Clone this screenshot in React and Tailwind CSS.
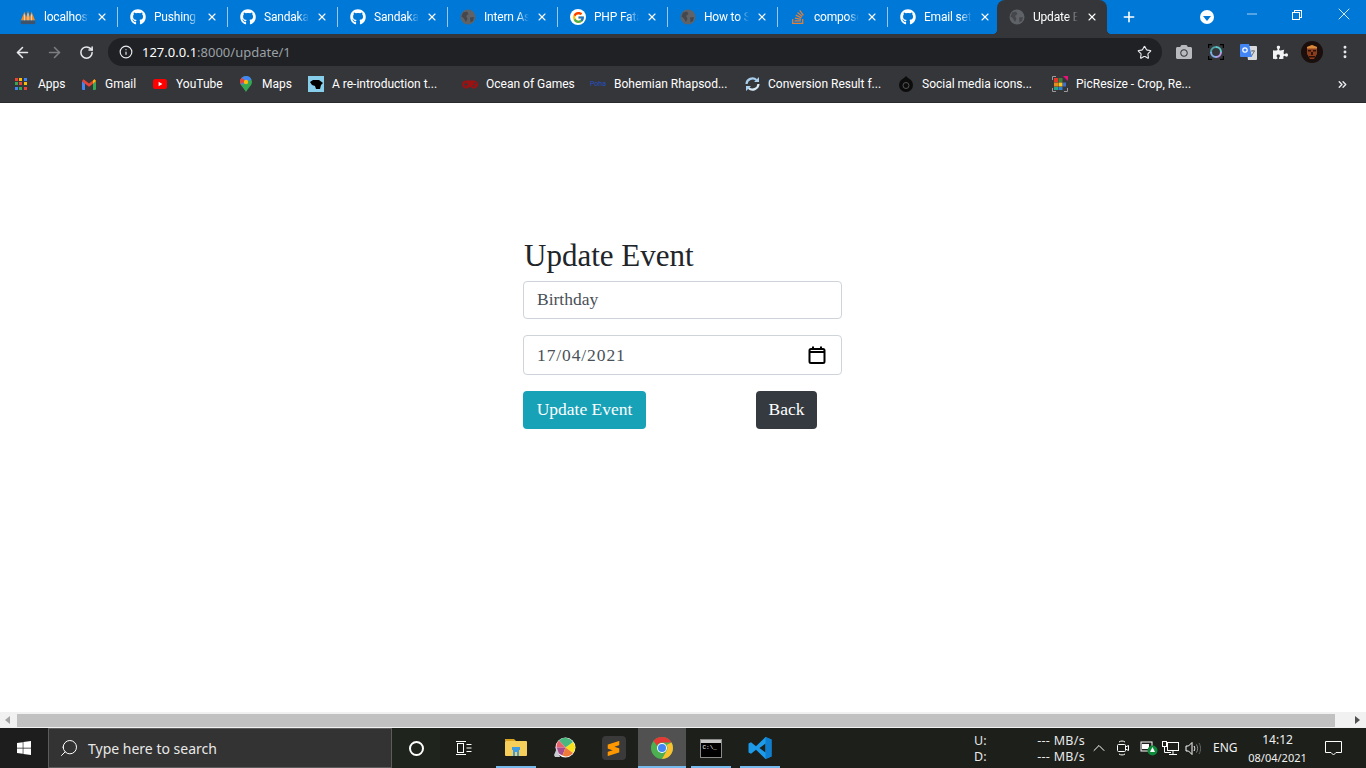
import React from 'react';
import { ArrowLeft, ArrowRight, RotateCw, Info, Star, X, Plus, Minus, Search, ChevronUp, ChevronsRight, MoreVertical } from 'lucide-react';
import { FaGithub, FaStackOverflow, FaPuzzlePiece, FaCamera, FaWindows, FaGamepad } from 'react-icons/fa';
import { FcGoogle } from 'react-icons/fc';
import { SiSublimetext } from 'react-icons/si';

const UI_FONT = 'font-["Noto_Sans","Open_Sans",sans-serif]';
const LABEL_FONT = 'font-["Roboto","Noto_Sans",sans-serif]';

function Globe() {
  return <svg width="16" height="16" viewBox="0 0 16 16">
      <circle cx="8" cy="8" r="7.5" fill="#5f6368" />
      <path d="M3 3.5 7 2.5 8.5 5 6 7 7.5 9.5 6 13 3.5 9 1.5 7.5ZM10 8.5 14 8 13 12 10.5 13.5Z" fill="#35363a" opacity="0.6" />
    </svg>;
}

function Xampp() {
  return <svg width="18" height="18" viewBox="0 0 18 18">
      <path d="M1 13 5 3 7 9 9 2 11 9 13 3 17 13Z" fill="#f08a24" />
      <path d="M5 6v7M9 5v8M13 6v7" stroke="#cfe3f5" strokeWidth="1" />
      <rect x="1" y="13" width="16" height="4" fill="#40536b" />
    </svg>;
}

const TABS = [
  { icon: <Xampp />, title: 'localhost' },
  { icon: <FaGithub size={16} color="#fff" />, title: 'Pushing t' },
  { icon: <FaGithub size={16} color="#fff" />, title: 'Sandakal' },
  { icon: <FaGithub size={16} color="#fff" />, title: 'Sandakal' },
  { icon: <Globe />, title: 'Intern As' },
  { icon: <span className="flex w-4 h-4 items-center justify-center rounded-full bg-white"><FcGoogle size={13} /></span>, title: 'PHP Fata' },
  { icon: <Globe />, title: 'How to S' },
  { icon: <FaStackOverflow size={16} color="#e0803a" />, title: 'compose' },
  { icon: <FaGithub size={16} color="#fff" />, title: 'Email set' }
];

function Tab({ icon, title, last }) {
  return <div className="flex w-[110px] h-[34px] shrink-0 items-center pl-3">
      <span className="flex w-4 h-4 shrink-0 items-center justify-center">{icon}</span>
      <span className={`ml-2 w-[48px] overflow-hidden whitespace-nowrap text-xs tracking-[-0.2px] text-white [mask-image:linear-gradient(to_right,black_75%,transparent)] ${LABEL_FONT}`}>{title}</span>
      <X size={12} strokeWidth={2.2} color="#fff" className="ml-[7px] shrink-0" />
      {!last && <span className="ml-[9px] h-5 w-px shrink-0 bg-[#9fc6ea]" />}
    </div>;
}

function AppsIcon() {
  const colors = ['#ea4335', '#fbbc04', '#4285f4', '#34a853', '#ea4335', '#fbbc04', '#4285f4', '#34a853', '#ea4335'];
  return <span className="grid w-3 h-3 grid-cols-3 gap-[1px]">
      {colors.map((c, i) => <span key={i} className="w-[3px] h-[3px]" style={{ background: c }} />)}
    </span>;
}

const GmailIcon = () => <svg width="14" height="11" viewBox="0 0 14 11">
    <path d="M0 2v8a1 1 0 0 0 1 1h2V4.5Z" fill="#4285f4" />
    <path d="M14 2v8a1 1 0 0 1-1 1h-2V4.5Z" fill="#34a853" />
    <path d="M0 2 1.5.3 7 4.5 12.5.3 14 2 11 4.8 7 7.8 3 4.8Z" fill="#ea4335" />
    <path d="M11 1.5 12.5.3 14 2 11 4.8Z" fill="#fbbc04" />
  </svg>;

const YoutubeIcon = () => <svg width="14" height="10" viewBox="0 0 14 10">
    <rect width="14" height="10" rx="2.5" fill="#ff0000" />
    <path d="M5.6 2.8 9.4 5 5.6 7.2Z" fill="#fff" />
  </svg>;

const MapsIcon = () => <svg width="12" height="16" viewBox="0 0 12 16">
    <path d="M6 0a6 6 0 0 1 6 6c0 3-3 5-6 10C3 11 0 9 0 6a6 6 0 0 1 6-6Z" fill="#34a853" />
    <path d="M6 0a6 6 0 0 1 5.4 3.4L2 9C1 8 0 7.4 0 6a6 6 0 0 1 6-6Z" fill="#4285f4" />
    <path d="M1.6 1.8 5 4.5 2 8C1 7.400 0 7 0 6a6 6 0 0 1 1.600-4.200Z" fill="#ea4335" />
    <circle cx="6" cy="6" r="2.200" fill="#fbbc04" />
  </svg>;

const PantherIcon = () => <span className="flex w-4 h-4 items-center justify-center bg-[#87ceeb]">
    <svg width="13" height="11" viewBox="0 0 13 11"><path d="M0 3 3 1h6l4 3-2 2-1 4H6L5 7 2 6Z" fill="#000" /></svg>
  </span>;

const PohaIcon = () => <span className="w-4 overflow-hidden text-[7px] leading-none text-[#2350c8]">Poha</span>;

const SyncIcon = () => <svg width="15" height="14" viewBox="0 0 15 14" fill="none">
    <path d="M1.500 7a6 6 0 0 1 10-4" stroke="#a9cfee" strokeWidth="2.200" />
    <path d="M13.500 7a6 6 0 0 1-10 4" stroke="#d8e9f6" strokeWidth="2.200" />
    <path d="M14 0v5H9ZM1 14V9h5Z" fill="#a9cfee" />
  </svg>;

const SocialIcon = () => <svg width="16" height="16" viewBox="0 0 16 16">
    <circle cx="8" cy="9" r="7" fill="#0c0c0c" />
    <circle cx="8" cy="9.500" r="3" fill="none" stroke="#55565a" strokeWidth="1" />
    <path d="M5 3 8 0l3 3Z" fill="#0c0c0c" />
  </svg>;

const PicResizeIcon = () => <svg width="16" height="16" viewBox="0 0 16 16">
    <path d="M.5 4V.5H4M.5 12v3.500H4M15.500 12v3.500H12" fill="none" stroke="#9a9a9a" />
    <rect x="2" y="2" width="4" height="4" fill="#e5362c" /><rect x="6.500" y="2" width="4" height="4" fill="#3e7f3c" />
    <rect x="2" y="6.500" width="4" height="4" fill="#e58a1f" /><rect x="6.500" y="6.500" width="4" height="4" fill="#f4c81e" />
    <rect x="11" y="6.500" width="3" height="4" fill="#3b6fd1" /><rect x="2" y="11" width="4" height="3" fill="#25a28a" />
    <rect x="6.500" y="11" width="4" height="3" fill="#2d7fd0" /><path d="M11 0h5v5Z" fill="#e6127a" />
  </svg>;

const BOOKMARKS = [
  { icon: <GmailIcon />, label: 'Gmail', w: 'w-[71px]' },
  { icon: <YoutubeIcon />, label: 'YouTube', w: 'w-[86px]' },
  { icon: <MapsIcon />, label: 'Maps', w: 'w-[70px]' },
  { icon: <PantherIcon />, label: 'A re-introduction t...', w: 'w-[154px]' },
  { icon: <FaGamepad size={17} color="#9c1212" />, label: 'Ocean of Games', w: 'w-[128px]' },
  { icon: <PohaIcon />, label: 'Bohemian Rhapsod...', w: 'w-[154px]' },
  { icon: <SyncIcon />, label: 'Conversion Result f...', w: 'w-[154px]' },
  { icon: <SocialIcon />, label: 'Social media icons...', w: 'w-[154px]' },
  { icon: <PicResizeIcon />, label: 'PicResize - Crop, Re...', w: 'w-[160px]' }
];

const Avatar = () => <svg width="22" height="22" viewBox="0 0 22 22">
    <circle cx="11" cy="11" r="11" fill="#1a0f0c" />
    <path d="M6 6 11 4 16 6 16 13 13 18 9 18 6 13Z" fill="#8c3d1c" />
    <path d="M7 9h3v1.500H7ZM12 9h3v1.500h-3ZM10 11h2v3h-2ZM8 15h6v1.500H8Z" fill="#2a120a" />
    <path d="M6 6 11 4 16 6 16 7.500 6 7.500Z" fill="#d98a3a" />
  </svg>;

const LensIcon = () => <svg width="16" height="16" viewBox="0 0 16 16" fill="none">
    <path d="M.5 4V.5H4M12 .5h3.500V4M.5 12v3.500H4M15.500 12v3.500H12" stroke="#000" strokeWidth="1.500" />
    <path d="M8 3a5 5 0 0 1 5 5" stroke="#5ec8c8" strokeWidth="2" /><path d="M13 8a5 5 0 0 1-5 5" stroke="#b79be8" strokeWidth="2" />
    <path d="M8 13a5 5 0 0 1-5-5" stroke="#7fb0e8" strokeWidth="2" /><path d="M3 8a5 5 0 0 1 5-5" stroke="#4da3a3" strokeWidth="2" />
  </svg>;

const TranslateIcon = () => <svg width="17" height="16" viewBox="0 0 17 16">
    <path d="M6 2h10a1 1 0 0 1 1 1v12a1 1 0 0 1-1 1H8Z" fill="#d8dadd" />
    <path d="M1 0h8l3 13H1a1 1 0 0 1-1-1V1a1 1 0 0 1 1-1Z" fill="#4285f4" />
    <circle cx="5" cy="6" r="2.200" fill="none" stroke="#fff" strokeWidth="1.200" />
    <path d="M11 7h4M13 6v1M11.500 12l3-5" stroke="#70757a" strokeWidth="1" />
  </svg>;

function ChromeHeader() {
  return <header className={`shrink-0 ${UI_FONT}`}>
      <div className="flex h-[34px] items-start bg-[#0078d7]">
        <div className="flex pl-[8px]">
          {TABS.map((t, i) => <Tab key={i} icon={t.icon} title={t.title} last={i === TABS.length - 1} />)}
          <div className="relative -ml-[1px] flex w-[110px] h-[34px] items-center rounded-t-lg bg-[#35363a] pl-3">
            <span className="absolute bottom-0 -left-[5px] w-[5px] h-[5px] bg-[radial-gradient(circle_at_0_0,#0078d7_5px,#35363a_5.5px)]" />
            <span className="absolute bottom-0 -right-[5px] w-[5px] h-[5px] bg-[radial-gradient(circle_at_100%_0,#0078d7_5px,#35363a_5.5px)]" />
            <Globe />
            <span className={`ml-2 w-[45px] overflow-hidden whitespace-nowrap text-xs tracking-[-0.2px] text-white [mask-image:linear-gradient(to_right,black_75%,transparent)] ${LABEL_FONT}`}>Update E</span>
            <X size={12} strokeWidth={2.2} color="#fff" className="ml-[8px] shrink-0" />
          </div>
        </div>
        <Plus size={16} strokeWidth={2.4} color="#fff" className="ml-[14px] mt-[9px]" />
        <span className="ml-[63px] mt-[10px] flex w-[14px] h-[14px] items-center justify-center rounded-full bg-white">
          <span className="mt-[2px] border-x-[4px] border-t-[5px] border-x-transparent border-t-[#0078d7]" />
        </span>
        <Minus size={16} strokeWidth={1} color="#fff" className="ml-[30px] mt-[6px]" />
        <span className="relative ml-[32px] mt-[10px] w-[10px] h-[10px]">
          <span className="absolute right-0 top-0 w-2 h-2 border border-white" />
          <span className="absolute bottom-0 left-0 w-2 h-2 border border-white bg-[#0078d7]" />
        </span>
        <X size={20} strokeWidth={1} color="#fff" className="ml-[32px] mt-[4px]" />
      </div>

      <div className="flex h-[36px] items-center bg-[#35363a]">
        <ArrowLeft size={17} strokeWidth={2.2} color="#e8eaed" className="ml-[14px]" />
        <ArrowRight size={17} strokeWidth={2.2} color="#7c7e82" className="ml-[15px]" />
        <RotateCw size={15} strokeWidth={2.4} color="#e8eaed" className="ml-[16px]" />
        <div className="ml-[14px] flex w-[1054px] h-[28px] items-center rounded-full bg-[#202124] pl-[11px] pr-[10px] text-sm">
          <Info size={14} strokeWidth={2} color="#e8eaed" />
          <span className="ml-[9px] text-[13px] text-white">127.0.0.1<span className="text-[#9aa0a6]">:8000/update/1</span></span>
          <Star size={15} strokeWidth={1.8} color="#e8eaed" className="ml-auto" />
        </div>
        <FaCamera size={16} color="#b8babd" className="ml-[14px]" />
        <span className="ml-[16px]"><LensIcon /></span>
        <span className="ml-[16px]"><TranslateIcon /></span>
        <FaPuzzlePiece size={15} color="#f1f3f4" className="ml-[16px]" />
        <span className="ml-[13px]"><Avatar /></span>
        <MoreVertical size={16} strokeWidth={2.4} color="#e8eaed" className="ml-[14px]" />
      </div>

      <div className={`flex h-[33px] items-center border-b border-[#28292c] bg-[#35363a] pb-[4px] ${LABEL_FONT}`}>
        <div className="flex w-[81px] shrink-0 items-center pl-[15px]">
          <span className="flex w-4 h-4 items-center justify-start"><AppsIcon /></span>
          <span className="ml-[7px] whitespace-nowrap text-xs text-white">Apps</span>
        </div>
        {BOOKMARKS.map(b => <div key={b.label} className={`flex shrink-0 items-center ${b.w}`}>
            <span className="flex w-4 h-4 items-center justify-center">{b.icon}</span>
            <span className="ml-2 whitespace-nowrap text-xs text-white">{b.label}</span>
          </div>)}
        <ChevronsRight size={13} strokeWidth={2.6} color="#e8eaed" className="ml-auto mr-[17px]" />
      </div>
    </header>;
}

function UpdateForm() {
  return <main className='flex-1 overflow-hidden bg-white pl-[523px] pt-[134px] font-["Liberation_Serif",Georgia,serif] text-[#212529]'>
      <h1 className="ml-px text-[31px] leading-[37px]">Update Event</h1>
      <form className="mt-[7px] w-[319px]">
        <input defaultValue="Birthday" className="block w-full h-[38px] rounded border border-[#ced4da] px-[13px] pb-[2px] text-[17.500px] text-[#495057] outline-none" />
        <div className="mt-[16px] flex h-[40px] items-center justify-between rounded border border-[#ced4da] pl-[13px] pr-[15px] text-[17.500px] tracking-[0.9px] text-[#495057]">
          <span>17/04/2021</span>
          <svg width="18" height="18" viewBox="0 0 18 18" fill="none">
            <rect x="1.500" y="3" width="15" height="14" rx="1.500" stroke="#000" strokeWidth="2" />
            <path d="M1.500 6h15" stroke="#000" strokeWidth="2" />
            <path d="M5 0.500v3M13 0.500v3" stroke="#000" strokeWidth="2" />
          </svg>
        </div>
        <div className="mt-[16px] flex items-center">
          <button type="button" className="h-[38px] w-[123px] rounded bg-[#17a2b8] pb-[2px] text-[17.500px] text-white">Update Event</button>
          <button type="button" className="ml-[110px] h-[38px] w-[61px] rounded bg-[#343a40] pb-[2px] text-[17.500px] text-white">Back</button>
        </div>
      </form>
    </main>;
}

function ScrollBar() {
  return <div className="flex h-[16px] shrink-0 items-center bg-[#f1f1f1]">
      <span className="ml-[5px] border-y-[4px] border-r-[5px] border-y-transparent border-r-[#a3a3a3]" />
      <div className="ml-[7px] h-[13px] w-[1318px] bg-[#c1c1c1]" />
      <span className="ml-[20px] border-y-[4px] border-l-[5px] border-y-transparent border-l-[#505050]" />
    </div>;
}

const ExplorerIcon = () => <svg width="22" height="20" viewBox="0 0 22 20">
    <path d="M0 1h9l2 2H0Z" fill="#d9a31f" />
    <rect y="3" width="22" height="15" rx="1" fill="#f6cf5a" />
    <path d="M7 9h8v3H7ZM8 12h6v6H8Z" fill="#3f9be0" />
    <rect x="10" y="14" width="2" height="4" fill="#f6cf5a" />
  </svg>;

const PaintIcon = () => <svg width="22" height="22" viewBox="0 0 22 22">
    <circle cx="11.500" cy="10.500" r="10" fill="#fff" />
    <path d="M11.500 10.500 19 5a9 9 0 0 1 0 11Z" fill="#f7e11d" />
    <path d="M11.500 10.500 19 5a9 9 0 0 0-14-1.500Z" fill="#48b87f" />
    <path d="M11.500 10.500 5 3.500a9 9 0 0 0-2.500 7Z" fill="#e7616a" />
    <path d="M11.500 10.500 2.500 10.500a9 9 0 0 0 6 8Z" fill="#a94c8c" />
    <path d="M11.500 10.500 8.500 18.500a9 9 0 0 0 10.500-2.500Z" fill="#ef7a3a" />
    <path d="M0 18 3 11l3 9-5 0Z" fill="#c9cccf" />
  </svg>;

const ChromeIcon = () => <svg width="22" height="22" viewBox="0 0 22 22">
    <circle cx="11" cy="11" r="11" fill="#4caf50" />
    <path d="M11 0a11 11 0 0 1 9.500 5.500H11a5.500 5.500 0 0 0-5 3.200L2.500 3.800A11 11 0 0 1 11 0Z" fill="#e53935" />
    <path d="M20.500 5.500A11 11 0 0 1 11 22l4.700-8.200A5.500 5.500 0 0 0 15.500 8Z" fill="#fbc02d" />
    <circle cx="11" cy="11" r="5" fill="#fff" /><circle cx="11" cy="11" r="4" fill="#4285f4" />
  </svg>;

const VsCodeIcon = () => <svg width="24" height="24" viewBox="0 0 24 24">
    <path d="M17.500 1 23.500 3.500V20.500L17.500 23 8 13.800 3 17.700 0.500 16.500V7.500L3 6.300 8 10.200ZM17.500 7.500 11.500 12l6 4.500Z" fill="#1e9be8" />
    <path d="M17.500 1 23.500 3.500V20.500L17.500 23Z" fill="#0e7fd0" />
  </svg>;

function TaskbarItem({ children, active, running, width }) {
  return <div className={`relative flex h-[40px] shrink-0 items-center justify-center ${width} ${active ? 'bg-[#515151]' : ''}`}>
      {children}
      {running && <span className={`absolute bottom-0 left-0 right-0 mx-auto h-[2px] bg-[#76b9ed] ${active ? 'w-full' : 'w-10'}`} />}
    </div>;
}

function Taskbar() {
  return <footer className={`flex h-[40px] shrink-0 bg-[#1d1d1d] text-white ${UI_FONT}`}>
      <div className="flex w-[48px] items-center justify-center"><FaWindows size={16} color="#fff" /></div>
      <div className="flex w-[344px] items-center border border-[#5c5c5c] bg-[#333333] pl-[10px] text-sm text-[#e8e8e8]">
        <Search size={20} strokeWidth={1.2} color="#fff" className="-scale-x-100" />
        <span className="ml-[9px] pt-[2px]">Type here to search</span>
      </div>
      <div className="flex bg-[#1f251c]">
        <TaskbarItem width="w-[48px]"><span className="w-[15px] h-[15px] rounded-full border-2 border-white" /></TaskbarItem>
      </div>
      <div className="flex flex-1 items-center bg-[#1c1f1a]">
        <TaskbarItem width="w-[48px]">
          <svg width="18" height="16" viewBox="0 0 18 16" fill="none" stroke="#fff">
            <rect x="2.500" y="3.500" width="6" height="9" /><path d="M1 1.500h10M1 14.500h10M11.500 4.500h5M11.500 8h5M11.500 11.500h5" />
          </svg>
        </TaskbarItem>
        <span className="w-[3px] shrink-0" />
        <TaskbarItem width="w-[49px]" running><ExplorerIcon /></TaskbarItem>
        <TaskbarItem width="w-[49px]"><PaintIcon /></TaskbarItem>
        <TaskbarItem width="w-[49px]">
          <span className="flex w-6 h-6 items-center justify-center rounded-sm bg-[#3a3a3a]"><SiSublimetext size={15} color="#ff9800" /></span>
        </TaskbarItem>
        <TaskbarItem width="w-[48px]" active running><ChromeIcon /></TaskbarItem>
        <TaskbarItem width="w-[49px]" running>
          <span className="flex w-[22px] h-[19px] flex-col border border-[#8b8b8b] bg-black">
            <span className="h-[3px] bg-[#c7c7c7]" />
            <span className="pl-[2px] pt-[1px] font-['Liberation_Mono',monospace] text-[6px] leading-[7px] text-white">C:\_</span>
          </span>
        </TaskbarItem>
        <TaskbarItem width="w-[49px]" running><VsCodeIcon /></TaskbarItem>
        <div className="ml-[190px] mt-[2px] w-[111px] shrink-0 text-[12.500px] leading-[16px] text-[#e8e8e8]">
          <div className="flex justify-between"><span>U:</span><span className="tracking-[0.3px]">--- MB/s</span></div>
          <div className="flex justify-between"><span>D:</span><span className="tracking-[0.3px]">--- MB/s</span></div>
        </div>
        <ChevronUp size={20} strokeWidth={1.2} color="#fff" className="ml-[4px] shrink-0" />
        <svg width="14" height="18" viewBox="0 0 14 18" fill="none" stroke="#fff" className="ml-[7px] shrink-0">
          <rect x="1.500" y="5.500" width="8" height="7" rx="1" /><path d="M9.500 8 12.500 6.500v5L9.500 10M3 3c2-1.300 4-1.300 6 0M3 15c2 1.300 4 1.300 6 0" />
        </svg>
        <svg width="18" height="16" viewBox="0 0 18 16" className="ml-[10px] shrink-0">
          <rect x="1" y="2" width="11" height="9" fill="none" stroke="#fff" />
          <rect x="2" y="4" width="7" height="5" fill="#fff" />
          <circle cx="12.500" cy="10.500" r="5" fill="#0f8a3a" />
          <path d="M12.500 7 15 12h-5Z" fill="#fff" />
        </svg>
        <svg width="18" height="16" viewBox="0 0 18 16" fill="none" stroke="#fff" className="ml-[3px] shrink-0">
          <rect x="6.500" y="2.500" width="11" height="8" /><rect x="1.500" y="1.500" width="4" height="5" /><path d="M3.500 6.500V12.500M3.500 12.500H10M12 10.500V14.500M8 14.500H16" />
        </svg>
        <svg width="17" height="15" viewBox="0 0 17 15" fill="none" stroke="#fff" className="ml-[6px] shrink-0">
          <path d="M1 5h2.500L7 1.500v12L3.500 10H1Z" /><path d="M9 5c1 1.500 1 3.500 0 5" /><path d="M11.500 3.500c1.500 2.500 1.500 5.500 0 8" stroke="#8a8a8a" /><path d="M14 2c2 3 2 8 0 11" stroke="#666" />
        </svg>
        <span className="ml-[11px] shrink-0 text-xs text-[#f0f0f0]">ENG</span>
        <div className="ml-[10px] mt-[1px] w-[60px] shrink-0 text-center text-xs leading-[18px] text-[#f0f0f0]">
          <div>14:12</div><div className="text-[11px] whitespace-nowrap">08/04/2021</div>
        </div>
        <svg width="17" height="15" viewBox="0 0 17 15" fill="none" stroke="#fff" className="ml-[17px] shrink-0">
          <path d="M.5.500h16v11H11l-2.500 2.500L6 11.500H.5Z" />
        </svg>
      </div>
    </footer>;
}

export default function App() {
  return <div className="flex h-screen w-[1366px] flex-col overflow-hidden">
      <ChromeHeader />
      <UpdateForm />
      <ScrollBar />
      <Taskbar />
    </div>;
}
